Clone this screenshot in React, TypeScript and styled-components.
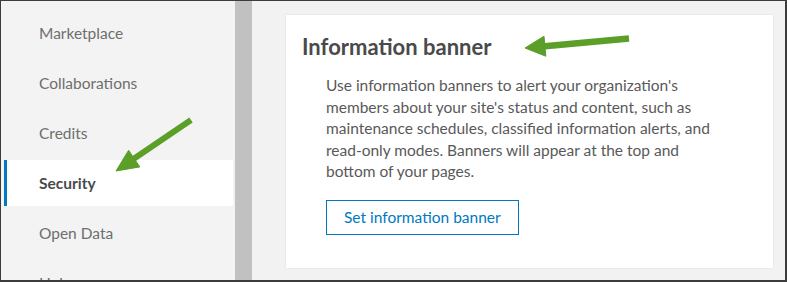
import React from "react";
import styled, { createGlobalStyle } from "styled-components";

const Global = createGlobalStyle`
  html, body { margin: 0; padding: 0; background: #f3f3f3; }
  * { box-sizing: border-box; }
`;

const Frame = styled.div`
  position: relative;
  width: 787px;
  height: 282px;
  display: flex;
  border: 1px solid #3c3c3c;
  border-right-width: 2px;
  border-bottom-width: 2px;
  overflow: hidden;
  font-family: Lato, "Liberation Sans", sans-serif;
  background: #f3f3f3;
`;

const Sidebar = styled.nav`
  width: 234px;
  flex: none;
  display: flex;
  flex-direction: column;
  gap: 4px;
  padding: 9px 2px 0 3px;
  background: #f3f3f3;
`;

const NavItem = styled.div<{ $active?: boolean }>`
  height: 46px;
  flex: none;
  display: flex;
  align-items: center;
  padding-left: 32px;
  border-left: 3px solid ${(p) => (p.$active ? "#0079c1" : "transparent")};
  background: ${(p) => (p.$active ? "#ffffff" : "transparent")};
  color: ${(p) => (p.$active ? "#4a4a4a" : "#6e6e6e")};
  font-weight: ${(p) => (p.$active ? 700 : 400)};
  font-size: 15.5px;
`;

const Scrollbar = styled.div`
  width: 17px;
  flex: none;
  background: #c1c1c1;
`;

const Main = styled.main`
  flex: 1;
  display: flex;
  padding: 14px 12px 12px 34px;
  background: #f2f2f2;
`;

const Card = styled.section`
  flex: 1;
  background: #ffffff;
  box-shadow: 0 0 2px rgba(0, 0, 0, 0.1);
  padding: 18px 16px 0 16px;
`;

const Title = styled.h2`
  margin: 0;
  font-size: 22px;
  line-height: 28px;
  font-weight: 700;
  color: #4a4a4a;
`;

const Body = styled.div`
  padding-left: 24px;
  margin-top: 14px;
`;

const Text = styled.p`
  margin: 0;
  width: 398px;
  font-size: 15.5px;
  line-height: 21.5px;
  color: #595959;
`;

const Button = styled.button`
  margin-top: 17px;
  height: 35px;
  padding: 0 17px;
  background: #ffffff;
  border: 1px solid #0079c1;
  color: #0079c1;
  font-family: inherit;
  font-size: 15.5px;
  cursor: pointer;
`;

const Overlay = styled.svg`
  position: absolute;
  left: -1px;
  top: -1px;
  pointer-events: none;
`;

const items = ["Marketplace", "Collaborations", "Credits", "Security", "Open Data", "Hub"];

export default function App() {
  return (
    <>
      <Global />
      <Frame>
        <Sidebar>
          {items.map((it) => (
            <NavItem key={it} $active={it === "Security"}>
              {it}
            </NavItem>
          ))}
        </Sidebar>
        <Scrollbar />
        <Main>
          <Card>
            <Title>Information banner</Title>
            <Body>
              <Text>
                Use information banners to alert your organization's members about your site's status
                and content, such as maintenance schedules, classified information alerts, and
                read-only modes. Banners will appear at the top and bottom of your pages.
              </Text>
              <Button>Set information banner</Button>
            </Body>
          </Card>
        </Main>
        <Overlay width="787" height="282" viewBox="0 0 787 282">
          <g fill="#5b9e28" stroke="#5b9e28">
            <line x1="191" y1="120" x2="132" y2="160" strokeWidth="6" />
            <polygon points="116,171 128.6,150.3 139.8,166.9" strokeWidth="1" strokeLinejoin="round" />
            <line x1="629" y1="38.5" x2="542" y2="46.4" strokeWidth="6.5" />
            <polygon points="525,48 544,36.2 545.8,56.2" strokeWidth="1" strokeLinejoin="round" />
          </g>
        </Overlay>
      </Frame>
    </>
  );
}
